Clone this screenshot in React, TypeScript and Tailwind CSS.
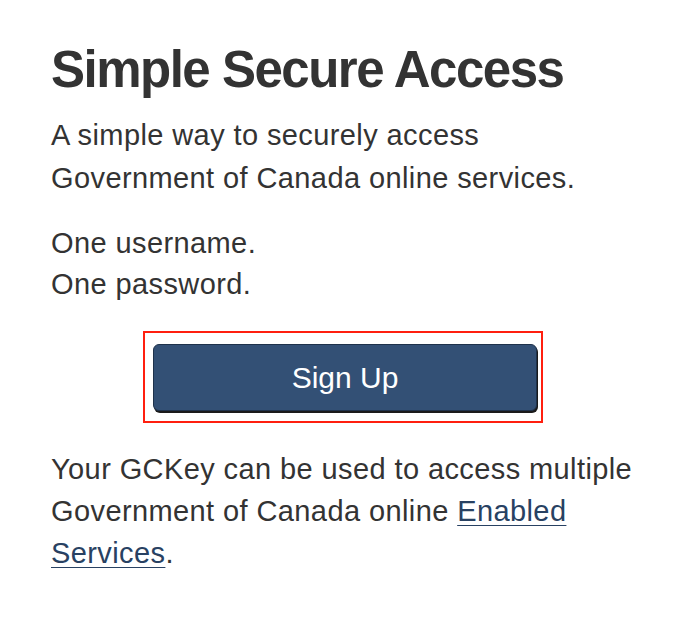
export default function App() {
  return (
    <div className="min-h-screen w-[694px] bg-white text-[#333] font-['Helvetica_Neue','Liberation_Sans',Arial,sans-serif]">
      <div className="px-[51px] pt-[40px]">
        <h1 className="text-[51px] font-bold leading-[60px] tracking-[-1.5px] text-[#333]">Simple Secure Access</h1>
        <p className="mt-[14px] text-[29px] leading-[43px] tracking-[0.4px]">
          A simple way to securely access
          <br />
          Government of Canada online services.
        </p>
        <p className="mt-[23px] text-[29px] leading-[41px] tracking-[0.4px]">
          One username.
          <br />
          One password.
        </p>
        <div className="mt-[26px] ml-[92px] w-[400px] border-2 border-[#ff1f0f] pt-[11px] pl-[8px] pr-[4px] pb-[10px]">
          <button className="flex h-[67px] w-[384px] items-center justify-center rounded-[6px] border border-[#1f324b] bg-[#335075] text-[30px] text-white shadow-[1px_2px_0_#1a1a1a]">
            Sign Up
          </button>
        </div>
        <p className="mt-[25px] text-[29px] leading-[42px] tracking-[0.4px]">
          Your GCKey can be used to access multiple Government of Canada online{" "}
          <a href="#" className="text-[#284162] underline underline-offset-[4px] decoration-1">
            Enabled Services
          </a>
          .
        </p>
      </div>
    </div>
  );
}
